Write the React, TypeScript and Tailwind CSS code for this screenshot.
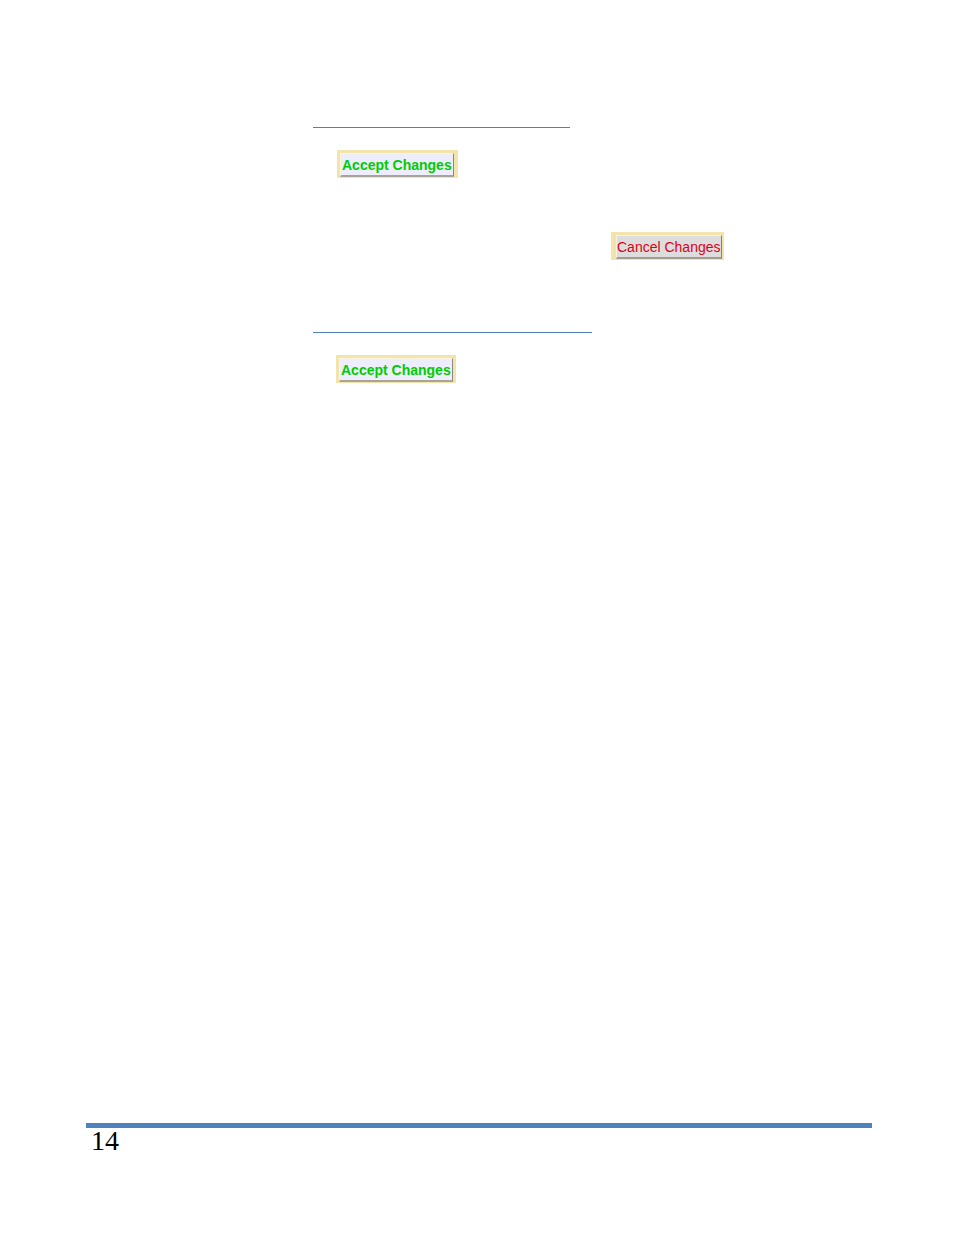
import React from 'react'

interface iPropsChangeButton {
    kind: 'accept' | 'cancel',
    className?: string
}

const ChangeButton:React.FC<iPropsChangeButton> = ({kind, className = ''}) => {
    return (
        <div className={`h-7 w-fit bg-[#f3e4ab] pt-[3px] pb-px ${className}`}>
            {
                kind === 'accept' ?
                    <button type="button" className="block h-6 border-t border-r border-b-2 border-l border-t-[#fbf5df] border-l-[#fbf5df] border-r-[#8c8880] border-b-[#aaa398] bg-[#ededfb] px-px text-sm leading-[22px] font-bold whitespace-nowrap text-[#00cc00]">
                        Accept Changes
                    </button>
                    :
                    <button type="button" className="block h-6 border-t border-r border-b-2 border-l border-t-[#f5f1e3] border-l-[#f5f1e3] border-r-[#85817a] border-b-[#a39c90] bg-[#dddddd] text-sm leading-[22px] whitespace-nowrap text-[#dd0018]">
                        Cancel Changes
                    </button>
            }
        </div>
    )
}

const App:React.FC = () => {
    return (
        <div className="flex min-h-screen flex-col bg-white pr-[82px] pl-[86px] font-['Liberation_Sans',Arial,sans-serif]">
            <main className="flex flex-col pt-[127px] pl-[227px]">
                <section className="flex flex-col">
                    <hr className="w-[257px] border-t border-[#4f81bd]" />
                    <ChangeButton kind="accept" className="mt-[22px] ml-6 pr-1 pl-[3px]" />
                    <ChangeButton kind="cancel" className="mt-[54px] ml-[298px] pr-[2px] pl-[5px]" />
                </section>
                <section className="mt-[72px] flex flex-col">
                    <hr className="w-[279px] border-t border-[#4f81bd]" />
                    <ChangeButton kind="accept" className="mt-[22px] ml-[23px] px-[3px]" />
                </section>
            </main>
            <footer className="mt-auto border-t-[5px] border-[#4f81bd] pb-[81px]">
                <p className="pl-[5px] font-['Liberation_Serif',serif] text-[28px] leading-[26px] text-black">14</p>
            </footer>
        </div>
    )
}

export default App
